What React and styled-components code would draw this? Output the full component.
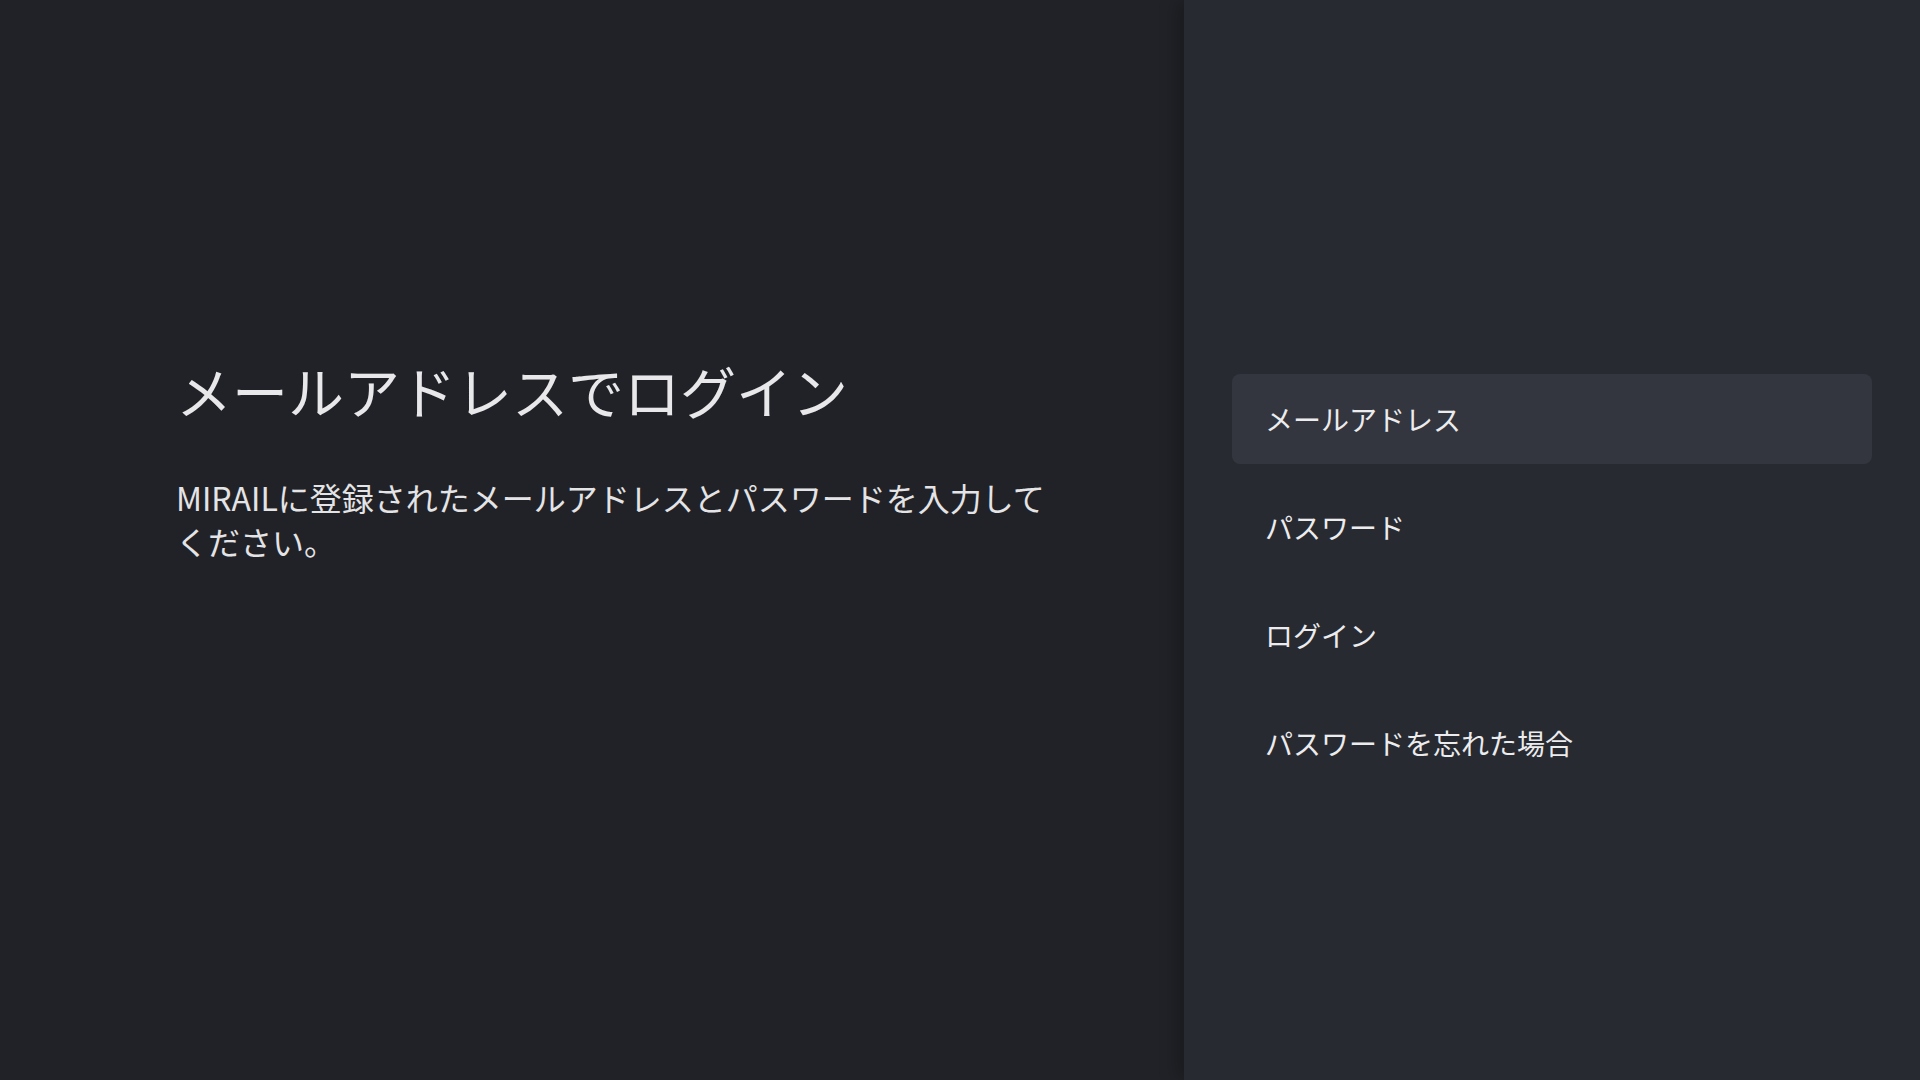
import React from "react";
import styled, { createGlobalStyle } from "styled-components";

const Global = createGlobalStyle`
  html, body, #root { margin: 0; padding: 0; height: 100%; }
  body {
    background: #212227;
    font-family: "Noto Sans CJK JP", "Noto Sans", sans-serif;
    color: #e6e6e8;
    overflow: hidden;
  }
`;

const Screen = styled.div`
  display: flex;
  width: 1920px;
  height: 1080px;
`;

const InfoPane = styled.section`
  flex: 0 0 1184px;
  box-sizing: border-box;
  padding: 353px 0 0 176px;
  background: #212227;
`;

const Title = styled.h1`
  margin: 0;
  font-size: 56px;
  font-weight: 400;
  line-height: 73px;
  color: #e8e8ea;
  letter-spacing: 0;
`;

const Description = styled.p`
  margin: 49px 0 0;
  max-width: 880px;
  font-size: 32px;
  font-weight: 400;
  line-height: 44px;
  color: #e4e4e6;
`;

const MenuPane = styled.nav`
  flex: 1;
  position: relative;
  box-sizing: border-box;
  padding: 374px 48px 0;
  background: #272a31;
  box-shadow: -8px 0 16px rgba(0, 0, 0, 0.22);
  display: flex;
  flex-direction: column;
  gap: 18px;
`;

const MenuItem = styled.div`
  height: 90px;
  box-sizing: border-box;
  padding-left: 33px;
  display: flex;
  align-items: center;
  border-radius: 8px;
  font-size: 28px;
  line-height: 1;
  color: #ececee;
  background: ${(p) => (p.$active ? "#33363e" : "transparent")};
`;

const items = ["メールアドレス", "パスワード", "ログイン", "パスワードを忘れた場合"];

export default function App() {
  return (
    <>
      <Global />
      <Screen>
        <InfoPane>
          <Title>メールアドレスでログイン</Title>
          <Description>
            MIRAILに登録されたメールアドレスとパスワードを入力してください。
          </Description>
        </InfoPane>
        <MenuPane>
          {items.map((t, i) => (
            <MenuItem key={t} $active={i === 0}>
              {t}
            </MenuItem>
          ))}
        </MenuPane>
      </Screen>
    </>
  );
}
